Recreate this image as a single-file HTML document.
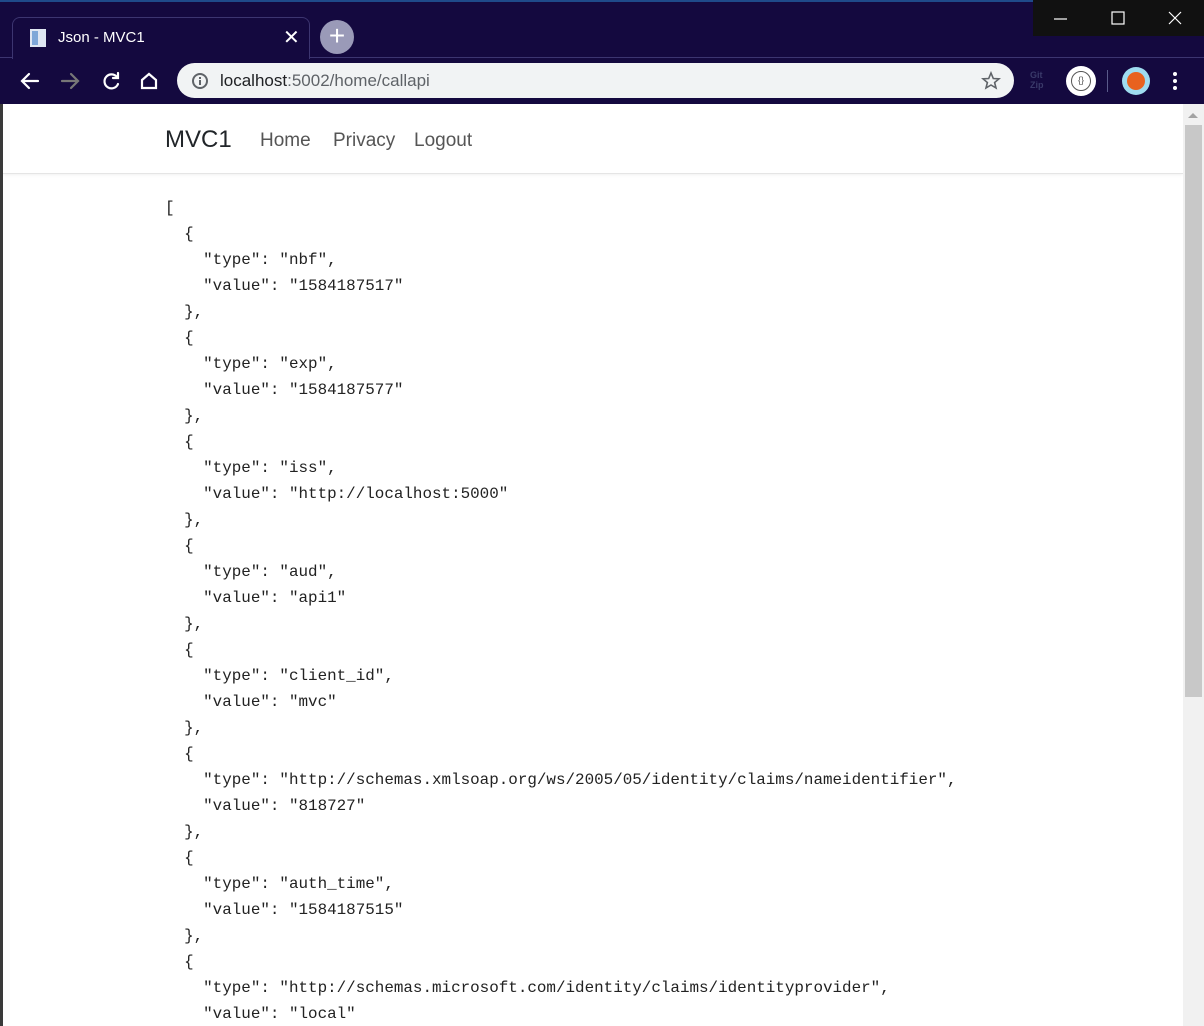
<!DOCTYPE html>
<html><head><meta charset="utf-8"><style>
*{margin:0;padding:0;box-sizing:border-box}
html,body{width:1204px;height:1026px;overflow:hidden}
body{background:#fff;position:relative;font-family:"Liberation Sans",sans-serif}
.top{position:absolute;left:0;top:0;width:1204px;height:104px;background:#14093f}
.topline{position:absolute;left:0;top:0;width:1204px;height:2px;background:#1f4a8a}
.tab{position:absolute;left:12px;top:17px;width:298px;height:42px;background:#14093f;border:1px solid #3c3570;border-bottom:none;border-radius:8px 8px 0 0}
.tabline{position:absolute;left:0;top:57px;width:1204px;height:1px;background:#3c3570}
.tab .t{position:absolute;left:45px;top:11px;color:#fff;font-size:15px}
.tab .x{position:absolute;left:270px;top:7px;color:#fff;font-size:20px}
.newtab{position:absolute;left:320px;top:20px;width:34px;height:34px;border-radius:50%;background:#9a9ab8;color:#fff;font-size:28px;line-height:32px;text-align:center}
.win{position:absolute;left:1033px;top:0;width:171px;height:36px;background:#111}
.url{position:absolute;left:177px;top:63px;width:837px;height:35px;background:#f1f3f4;border-radius:18px}
.url .u{position:absolute;left:43px;top:8px;font-size:17px;color:#202124}
.url .u span{color:#5f6368}
.page{position:absolute;left:3px;top:104px;width:1180px;height:922px;background:#fff;overflow:hidden}
.nav{position:absolute;left:0;top:0;width:1180px;height:70px;border-bottom:1px solid #e5e5e5;box-shadow:0 1px 3px rgba(0,0,0,.06)}
.brand{position:absolute;left:162px;top:22px;font-size:24px;color:#212529}
.nl{position:absolute;top:26px;font-size:19px;color:#555}
pre{position:absolute;left:162px;top:91px;font-family:"Liberation Mono",monospace;font-size:15.9px;line-height:26px;color:#222}
.sb{position:absolute;left:1183px;top:104px;width:21px;height:922px;background:#f1f1f1}
.thumb{position:absolute;left:1185px;top:125px;width:17px;height:572px;background:#c8c8c8}
.lstrip{position:absolute;left:0;top:104px;width:3px;height:922px;background:#3a3a3a}
</style></head><body>
<div class="top">
<div class="topline"></div>
<div class="tabline"></div>
<div class="tab"><svg style="position:absolute;left:15px;top:10px" width="20" height="20"><rect x="2" y="1" width="16" height="18" fill="#dfe6f2"/><rect x="4" y="3" width="6" height="14" fill="#7fa7d8"/></svg><div class="t">Json - MVC1</div><div class="x">✕</div></div>
<div class="newtab">+</div>
<div class="win"><svg width="171" height="36" stroke="#fff" fill="none" stroke-width="1.2"><line x1="21" y1="19" x2="34" y2="19"/><rect x="79" y="12" width="12" height="12"/><path d="M136 12 L148 24 M148 12 L136 24"/></svg></div>
<svg style="position:absolute;left:0;top:60px" width="180" height="42" fill="none" stroke-width="2.2" stroke-linecap="round">
<path d="M22 21 H38 M29 14 L22 21 L29 28" stroke="#fff"/>
<path d="M62 21 H78 M71 14 L78 21 L71 28" stroke="#777"/>
<path d="M117 17 A7 7 0 1 0 118 24" stroke="#fff"/><path d="M118 13 V18 H113" stroke="#fff"/>
<path d="M142 20 L149 14 L156 20 V28 H142 Z" stroke="#fff"/>
</svg>
<div class="url"><svg style="position:absolute;left:14px;top:9px" width="18" height="18"><circle cx="9" cy="9" r="7" fill="none" stroke="#5f6368" stroke-width="2"/><rect x="8" y="8" width="2" height="5" fill="#5f6368"/><rect x="8" y="5" width="2" height="2" fill="#5f6368"/></svg><div class="u">localhost<span>:5002/home/callapi</span></div>
<svg style="position:absolute;left:804px;top:8px" width="20" height="20"><path d="M10 2 L12.3 7.5 L18 7.8 L13.6 11.5 L15 17 L10 14 L5 17 L6.4 11.5 L2 7.8 L7.7 7.5 Z" fill="none" stroke="#5f6368" stroke-width="1.6"/></svg></div>
<div style="position:absolute;left:1030px;top:70px;color:#3a3a6a;font-size:9px;font-weight:bold;line-height:10px">Git<br>Zip</div>
<div style="position:absolute;left:1066px;top:66px;width:30px;height:30px;border-radius:50%;background:#fff"><div style="position:absolute;left:5px;top:5px;width:20px;height:20px;border-radius:50%;border:1.5px solid #555;font-size:9px;text-align:center;line-height:17px;color:#555">{}</div></div>
<div style="position:absolute;left:1107px;top:70px;width:1px;height:22px;background:#5a5a8a"></div>
<div style="position:absolute;left:1122px;top:67px;width:28px;height:28px;border-radius:50%;background:#9fdcf0"><div style="position:absolute;left:5px;top:5px;width:18px;height:18px;border-radius:50%;background:#e8621f"></div></div>
<svg style="position:absolute;left:1170px;top:70px" width="10" height="22" fill="#fff"><circle cx="5" cy="4" r="2"/><circle cx="5" cy="11" r="2"/><circle cx="5" cy="18" r="2"/></svg>
</div>
<div class="lstrip"></div>
<div class="page">
<div class="nav"><div class="brand">MVC1</div><div class="nl" style="left:257px">Home</div><div class="nl" style="left:330px">Privacy</div><div class="nl" style="left:411px">Logout</div></div>
<pre>[
  {
    "type": "nbf",
    "value": "1584187517"
  },
  {
    "type": "exp",
    "value": "1584187577"
  },
  {
    "type": "iss",
    "value": "http://localhost:5000"
  },
  {
    "type": "aud",
    "value": "api1"
  },
  {
    "type": "client_id",
    "value": "mvc"
  },
  {
    "type": "http://schemas.xmlsoap.org/ws/2005/05/identity/claims/nameidentifier",
    "value": "818727"
  },
  {
    "type": "auth_time",
    "value": "1584187515"
  },
  {
    "type": "http://schemas.microsoft.com/identity/claims/identityprovider",
    "value": "local"
  },</pre>
</div>
<div class="sb"></div>
<div class="thumb"></div>
<svg style="position:absolute;left:1186px;top:110px" width="14" height="10"><path d="M2 8 L7 3 L12 8 Z" fill="#a3a3a3"/></svg>
</body></html>
